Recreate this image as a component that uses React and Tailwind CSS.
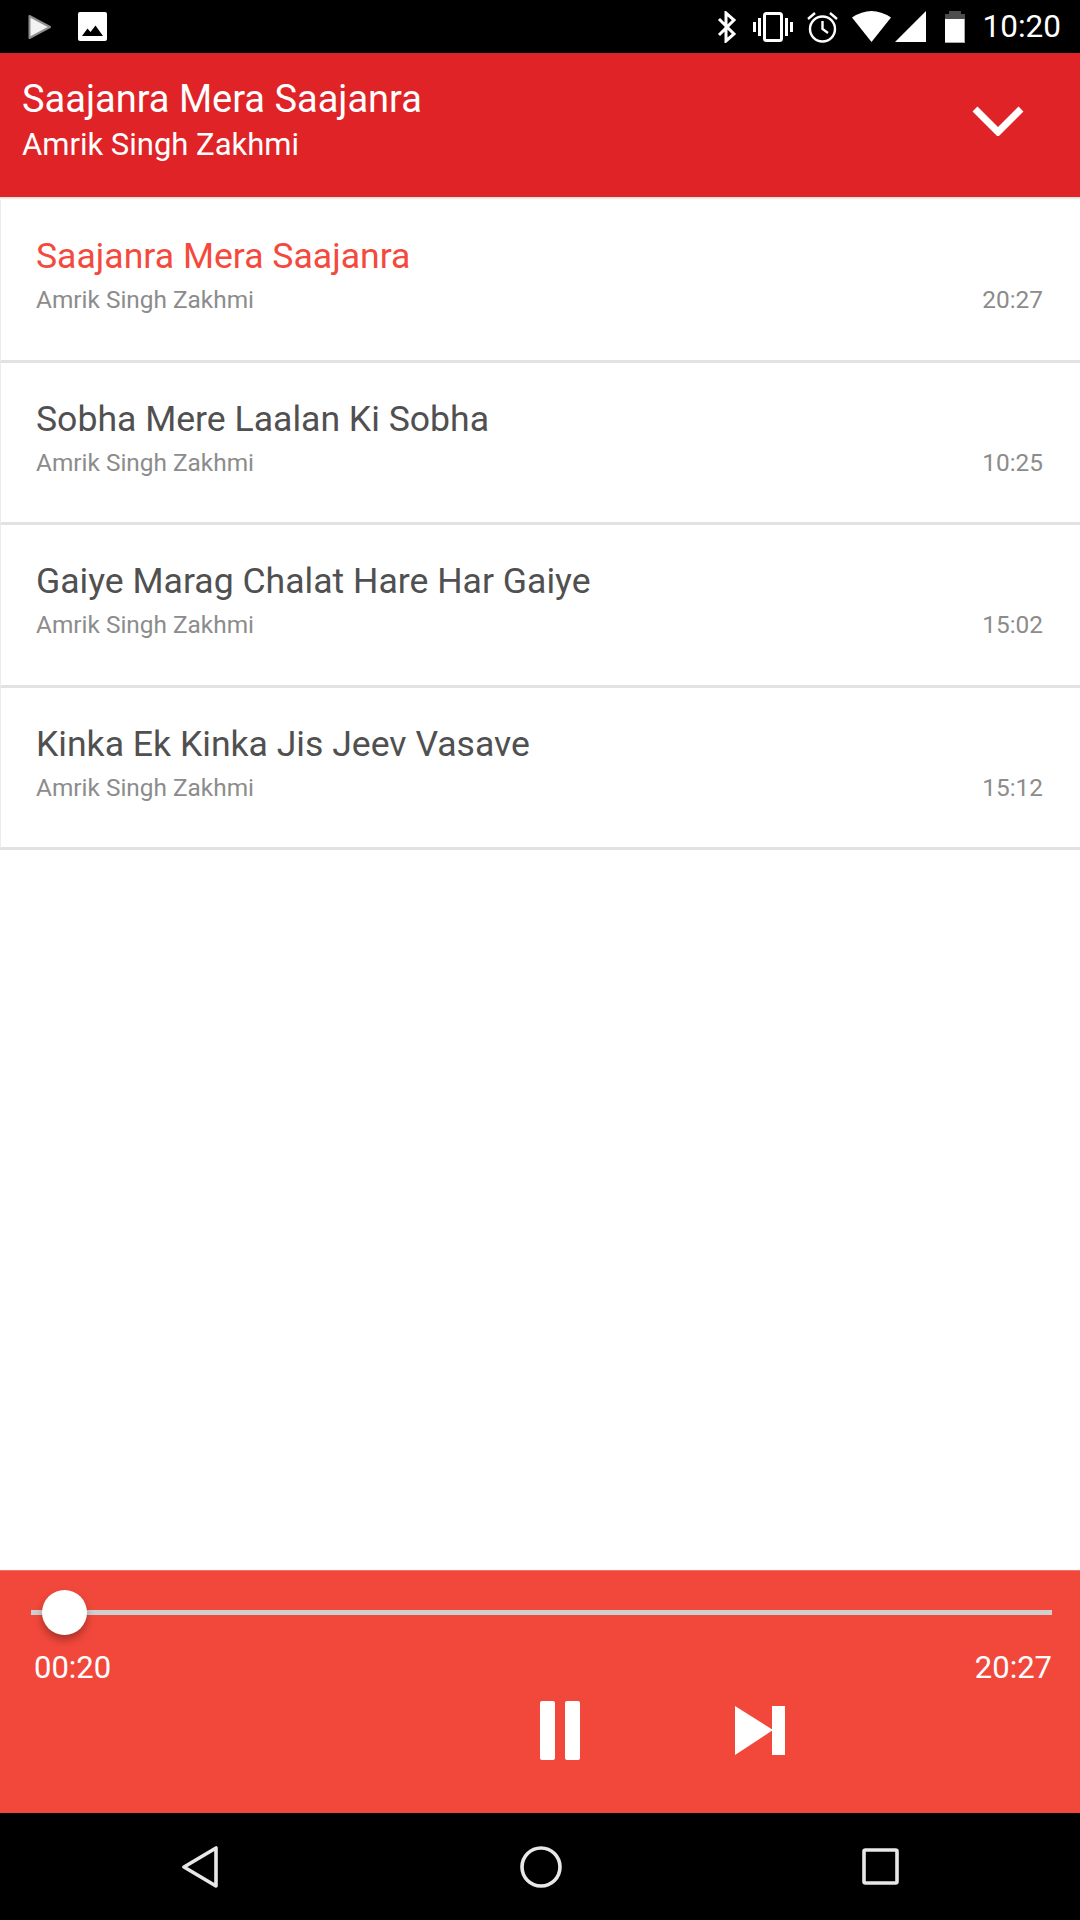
import React from 'react';

const tracks = [
  { title: 'Saajanra Mera Saajanra', time: '20:27', active: true },
  { title: 'Sobha Mere Laalan Ki Sobha', time: '10:25' },
  { title: 'Gaiye Marag Chalat Hare Har Gaiye', time: '15:02' },
  { title: 'Kinka Ek Kinka Jis Jeev Vasave', time: '15:12' },
];

function StatusBar() {
  return (
    <div className="h-[53px] bg-black flex items-center justify-between pl-[28px] pr-[19px]">
      <div className="flex items-center gap-[26px]">
        <svg width="24" height="26" viewBox="0 0 24 26">
          <path d="M1.5 2 L22 13 L1.5 24 Z" fill="#f2f2f2" stroke="#8f8f8f" strokeWidth="2" strokeLinejoin="round" />
        </svg>
        <svg width="29" height="29" viewBox="0 0 29 29">
          <rect width="29" height="29" rx="2" fill="#fff" />
          <path d="M4 24 L9.5 16.5 L12.5 20 L17.5 13.5 L25 24 Z" fill="#000" />
        </svg>
      </div>
      <div className="flex items-center">
        <svg width="20" height="32" viewBox="0 0 20 32" fill="none" stroke="#fff" strokeWidth="3" className="mr-[16px]">
          <path d="M2 8 L17 23 L9 30 V2 L17 9 L2 24" />
        </svg>
        <svg width="40" height="30" viewBox="0 0 40 30" fill="none" stroke="#fff" strokeWidth="3" className="mr-[14px]">
          <rect x="11.5" y="1.5" width="17" height="27" rx="2" />
          <path d="M1.5 10 V20 M6.5 6 V24 M33.5 6 V24 M38.5 10 V20" />
        </svg>
        <svg width="31" height="32" viewBox="0 0 31 32" fill="none" stroke="#fff" strokeWidth="2.4" className="mr-[14px]">
          <circle cx="15.5" cy="18" r="12.5" />
          <path d="M15.5 10 V18 L21 22 M1 8 L8 2 M30 8 L23 2" />
        </svg>
        <svg width="39" height="31" viewBox="0 0 39 31" className="mr-[4px]">
          <path d="M19.5 31 L0 6.5 Q19.5 -6.5 39 6.5 Z" fill="#fff" />
        </svg>
        <svg width="31" height="31" viewBox="0 0 31 31" className="mr-[19px]">
          <path d="M31 0 V31 H0 Z" fill="#fff" />
        </svg>
        <svg width="20" height="32" viewBox="0 0 20 32" className="mr-[18px]">
          <path d="M4 0 H16 V3 H20 V32 H0 V3 H4 Z" fill="#4d4d4d" />
          <rect y="8" width="20" height="24" fill="#a8a8a8" />
          <rect y="8" width="19" height="23" fill="#fff" />
        </svg>
        <span className="text-[31.5px] leading-none text-white">10:20</span>
      </div>
    </div>
  );
}

function Header() {
  return (
    <div className="h-[144px] bg-[#e02326] flex items-start justify-between pl-[22px] pr-[56px] pt-[25px]">
      <div className="text-white">
        <p className="text-[38px] leading-[42px]">Saajanra Mera Saajanra</p>
        <p className="text-[31px] leading-[36px] mt-[7px]">Amrik Singh Zakhmi</p>
      </div>
      <svg width="52" height="31" viewBox="0 0 52 31" className="mt-[27px]" fill="none" stroke="#fff" strokeWidth="7">
        <path d="M3 4 L26 27 L49 4" />
      </svg>
    </div>
  );
}

function TrackRow({ title, time, active }) {
  return (
    <div className="h-[162.5px] border-b-[3px] border-b-[#e2e2e2] border-l border-l-[#ececec] pl-[35px] pr-[37px] pt-[35px]">
      <p className={`text-[35.6px] leading-[42px] ${active ? 'text-[#f44a3e]' : 'text-[#505050]'}`}>{title}</p>
      <div className="flex items-center justify-between mt-[5px] text-[24.4px] leading-[36px] text-[#8c8c8c]">
        <span>Amrik Singh Zakhmi</span>
        <span>{time}</span>
      </div>
    </div>
  );
}

function Player() {
  return (
    <div className="h-[243px] bg-[#f2483b] border-t border-[#f66d62] pl-[31px] pr-[28px] pt-[19px]">
      <div className="relative h-[45px] flex items-center">
        <div className="w-full h-[5px] bg-[#cfcfcf]" />
        <div className="absolute left-[11px] top-0 w-[45px] h-[45px] rounded-full bg-white shadow-[0_5px_8px_rgba(0,0,0,0.3)]" />
      </div>
      <div className="flex justify-between text-white text-[31px] leading-[36px] mt-[15px] pl-[3px]">
        <span>00:20</span>
        <span>20:27</span>
      </div>
      <div className="flex items-start mt-[15px] pl-[509px]">
        <div className="flex gap-[10px]">
          <div className="w-[15px] h-[59px] bg-white rounded-[2px]" />
          <div className="w-[15px] h-[59px] bg-white rounded-[2px]" />
        </div>
        <svg width="50" height="50" viewBox="0 0 50 50" className="ml-[155px] mt-[5px]" fill="#fff">
          <path d="M0 0 L38 24 L0 49 Z" />
          <rect x="37" y="0" width="13" height="49" />
        </svg>
      </div>
    </div>
  );
}

function NavBar() {
  return (
    <div className="h-[107px] bg-black flex items-center pl-[182px]">
      <svg width="36" height="42" viewBox="0 0 36 42" fill="none" stroke="#e8e8e8" strokeWidth="3.6" strokeLinejoin="round">
        <path d="M34 2 V40 L2 21 Z" />
      </svg>
      <svg width="42" height="42" viewBox="0 0 42 42" fill="none" stroke="#e8e8e8" strokeWidth="3.6" className="ml-[302px]">
        <circle cx="21" cy="21" r="19" />
      </svg>
      <svg width="37" height="37" viewBox="0 0 37 37" fill="none" stroke="#e8e8e8" strokeWidth="3.6" className="ml-[300px]">
        <rect x="2" y="2" width="33" height="33" rx="1.5" />
      </svg>
    </div>
  );
}

export default function App() {
  return (
    <div className="w-[1080px] h-[1920px] flex flex-col bg-white font-['Roboto',sans-serif]">
      <StatusBar />
      <Header />
      <div className="flex-1">
        <div className="h-[3px] bg-gradient-to-b from-[#d8d8d8] to-white" />
        {tracks.map((t) => (
          <TrackRow key={t.title} {...t} />
        ))}
      </div>
      <Player />
      <NavBar />
    </div>
  );
}
